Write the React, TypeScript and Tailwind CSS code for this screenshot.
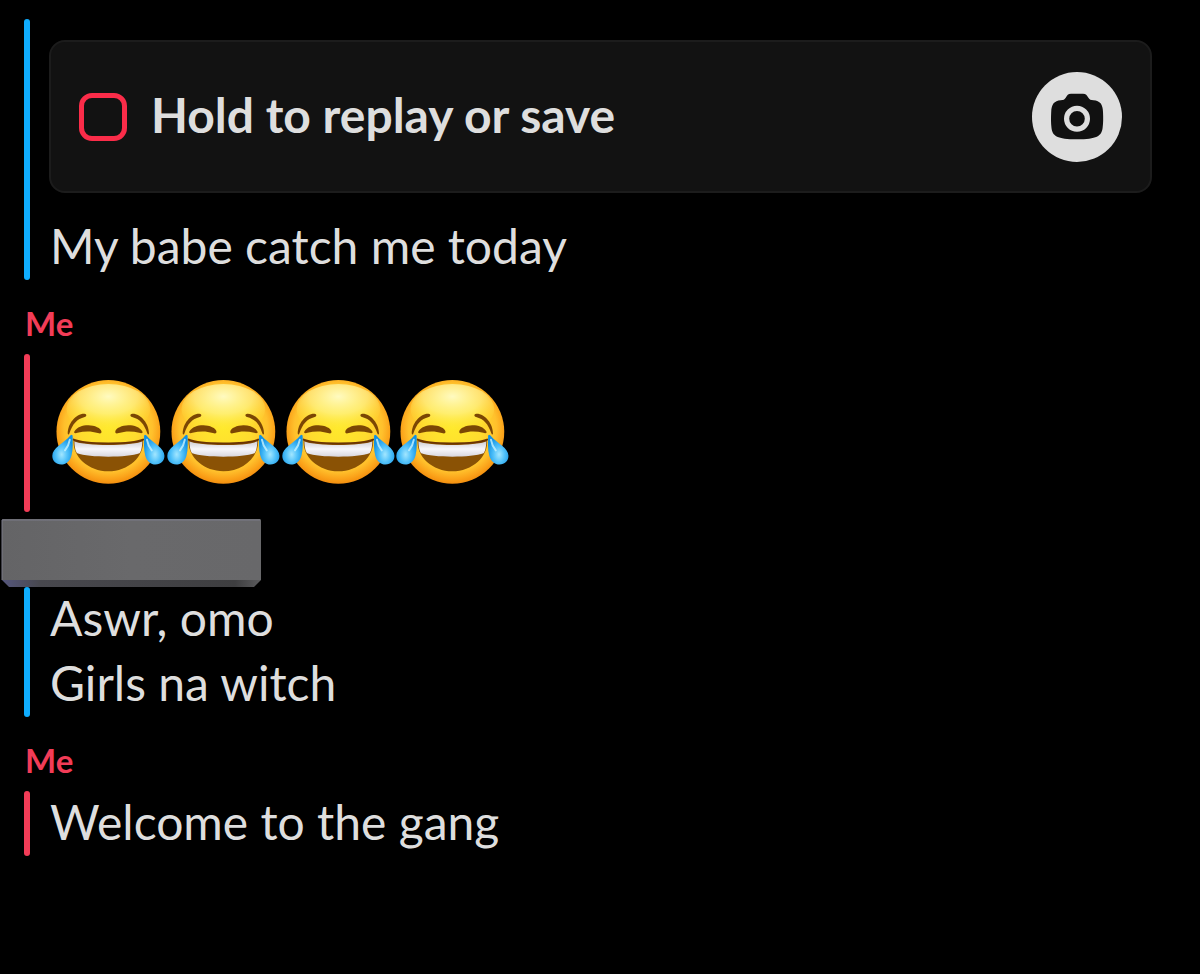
import type { ReactNode } from "react";

const BAR_COLORS = {
  friend: "bg-[#0fadff]",
  me: "bg-[#f23c57]",
};

function LaughingFace() {
  return (
    <svg viewBox="0 0 115 115" className="w-full" role="img" aria-label="Face with tears of joy">
      <defs>
        <radialGradient id="skin" cx="0.5" cy="0.46" r="0.56">
          <stop offset="0" stopColor="#ffe92c" />
          <stop offset="0.5" stopColor="#ffdb2e" />
          <stop offset="0.76" stopColor="#ffc02c" />
          <stop offset="0.88" stopColor="#fba31a" />
          <stop offset="1" stopColor="#f0860a" />
        </radialGradient>
        <radialGradient id="shine" cx="0.5" cy="0.25" r="0.7">
          <stop offset="0" stopColor="#fffcc8" stopOpacity="0.95" />
          <stop offset="0.5" stopColor="#fff79a" stopOpacity="0.6" />
          <stop offset="1" stopColor="#ffe92e" stopOpacity="0" />
        </radialGradient>
        <linearGradient id="teeth" x1="0" y1="0" x2="0" y2="1">
          <stop offset="0" stopColor="#cfcdd4" />
          <stop offset="0.5" stopColor="#f8f7fb" />
          <stop offset="1" stopColor="#d8d6de" />
        </linearGradient>
        <radialGradient id="tear" cx="0.46" cy="0.66" r="0.6">
          <stop offset="0" stopColor="#a2e6ff" />
          <stop offset="0.45" stopColor="#52c2fa" />
          <stop offset="1" stopColor="#1091e4" />
        </radialGradient>
      </defs>
      <circle cx="57.5" cy="58" r="52" fill="url(#skin)" />
      <ellipse cx="57.5" cy="35" rx="42" ry="25" fill="url(#shine)" />
      <path d="M22.7 65.3C33 71 82 71 92.3 65.3C94 83 77 97.5 57.5 97.5C38 97.5 21 83 22.7 65.3Z" fill="#8a5205" />
      <path d="M23.5 67.5C34 72.5 81 72.5 91.5 67.5C91.5 72 90.5 78 88.7 79.5C77 84 38 84 26.3 79.5C24.5 78 23.5 72 23.5 67.5Z" fill="url(#teeth)" />
      <path d="M22.7 65.8C34 70.8 81 70.8 92.3 65.8" fill="none" stroke="#6b3402" strokeWidth="2" strokeLinecap="round" />
      <HalfFace />
      <g transform="translate(115 0) scale(-1 1)">
        <HalfFace />
      </g>
    </svg>
  );
}

// Brow, closed eye and tear of the left side; the right side is its mirror image.
function HalfFace() {
  return (
    <>
      <path d="M16.8 60C16.5 50 25 39.5 33.5 39.8C36 40 36 42.5 33.8 43C26 45 21.5 50 18.5 59.5C18 61 17 61 16.8 60Z" fill="#7b4604" />
      <path d="M23.4 57.6C26 53 32 51.2 37.5 51.3C43.5 51.4 50.4 54 50.6 58C50.6 60 49 60 47 59.2C40.5 57 33.5 57 26.5 59C24 59.7 22.6 59.2 23.4 57.6Z" fill="#7b4604" />
      <path d="M19.6 61.5C20.8 60.2 21.8 61 21.7 62.8C21.7 68.5 22.3 75 20.5 82C19 87.5 15 90.8 10.2 90.8C5 90.8 1.2 87 1.3 82C1.4 74 12 70.5 19.6 61.5Z" fill="url(#tear)" />
      <path d="M18.8 66C18 71 16 74 14 76.5" fill="none" stroke="#c8f3ff" strokeWidth="2" strokeLinecap="round" opacity="0.8" />
    </>
  );
}

function CameraIcon() {
  return (
    <svg viewBox="0 0 90 90" className="size-full" aria-hidden="true">
      <path
        d="M39 21.7H51C54 21.7 54.8 23.2 56.2 25.4C57.5 27.6 58.8 28 61.5 28.2C68 28.8 70.8 32 71 40C71.3 46 71.3 51 70.6 56C69.5 64 65 67.3 45 67.3C25 67.3 20.5 64 19.5 56C18.9 51 18.9 46 19.2 40C19.5 32 22.2 28.8 28.7 28.2C31.4 28 32.6 27.6 33.9 25.4C35.2 23.2 36 21.7 39 21.7Z"
        fill="#111111"
      />
      <circle cx="45" cy="46.7" r="10.4" fill="#111111" stroke="#dedede" strokeWidth="5.2" />
    </svg>
  );
}

function SnapCard() {
  return (
    <div className="mt-[21px] mb-[22px] mr-12 flex h-[153px] items-center justify-between rounded-2xl border-2 border-[#1c1c1c] bg-[#121212] px-7">
      <button type="button" className="flex items-center gap-6 text-5xl font-bold">
        <span className="size-12 rounded-[13px] border-5 border-[#fb2c49]" />
        <span className="pb-1">Hold to replay or save</span>
      </button>
      <button type="button" aria-label="Open camera" className="size-[90px] rounded-full bg-[#dedede]">
        <CameraIcon />
      </button>
    </div>
  );
}

function MessageGroup({ from, children }: { from: "friend" | "me"; children: ReactNode }) {
  return (
    <div className="flex gap-[19px] pl-6">
      <div className={`w-[6px] shrink-0 rounded-sm ${BAR_COLORS[from]}`} />
      <div className="min-w-0 grow">{children}</div>
    </div>
  );
}

function Message({ text }: { text: string }) {
  return <p className="pb-1 pl-px text-5xl leading-[61px]">{text}</p>;
}

function SenderName({ name }: { name: string }) {
  return (
    <h2 className="h-[74px] pl-[25px] pt-6 text-[33px] font-bold leading-[38px] text-[#f23c57]">{name}</h2>
  );
}

export default function App() {
  return (
    <main className="min-h-screen bg-black pt-[19px] font-['Lato',sans-serif] text-[#dedede]">
      <MessageGroup from="friend">
        <SnapCard />
        <Message text="My babe catch me today" />
      </MessageGroup>

      <SenderName name="Me" />
      <MessageGroup from="me">
        <div className="grid h-[158px] w-[461px] grid-cols-4 items-center pb-1 pl-0.5">
          {Array.from({ length: 4 }).map((_, i) => (
            <LaughingFace key={i} />
          ))}
        </div>
      </MessageGroup>

      {/* hidden sender name */}
      <div className="flex h-[75px] items-end pl-px">
        <svg viewBox="0 0 260 69" className="h-[69px] w-[260px]" aria-hidden="true">
          <defs>
            <linearGradient id="face" x1="0" y1="0" x2="1" y2="0">
              <stop offset="0" stopColor="#646466" />
              <stop offset="0.5" stopColor="#69696b" />
              <stop offset="1" stopColor="#68686a" />
            </linearGradient>
            <linearGradient id="edge" x1="0" y1="0" x2="1" y2="0">
              <stop offset="0" stopColor="#55567c" />
              <stop offset="0.15" stopColor="#48484e" />
              <stop offset="0.9" stopColor="#3e3e40" />
              <stop offset="1" stopColor="#5c5c5e" />
            </linearGradient>
          </defs>
          <path d="M2 1H258Q260 1 260 3V62L253 69H8L1 62V3Q1 1 2 1Z" fill="url(#edge)" />
          <path d="M2 1H258Q260 1 260 3V62H1V3Q1 1 2 1Z" fill="url(#face)" />
          <path d="M1 62V2H259" fill="none" stroke="#7b7b88" strokeWidth="1" />
        </svg>
      </div>
      <MessageGroup from="friend">
        <Message text="Aswr, omo" />
        <Message text="Girls na witch" />
      </MessageGroup>

      <SenderName name="Me" />
      <MessageGroup from="me">
        <Message text="Welcome to the gang" />
      </MessageGroup>
    </main>
  );
}
